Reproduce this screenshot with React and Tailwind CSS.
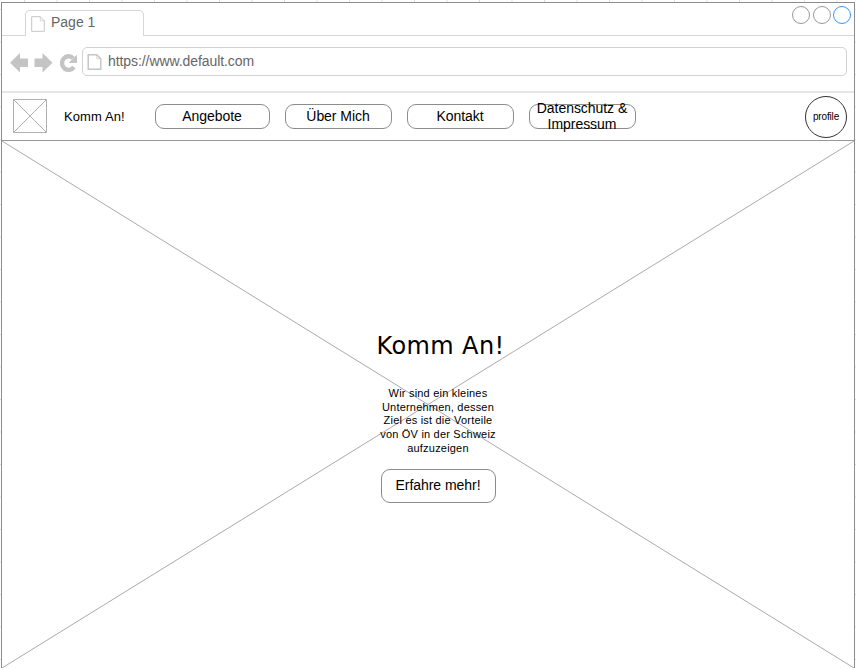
import React from "react";

function PageIcon({ className, stroke, width }) {
  return (
    <svg className={className} viewBox="0 0 14 16" fill="none" stroke={stroke} strokeWidth={width}>
      <path d="M.7.7H9.3L13.3 4.7V15.3H.7Z" />
      <path d="M9.3.7V4.7H13.3" strokeWidth=".7" />
    </svg>
  );
}

function NavButton({ children, className }) {
  return (
    <button className={`mb-px flex h-[25px] shrink-0 items-center justify-center rounded-[9px] border border-[#8c8c8c] pb-px pr-px text-sm leading-4 tracking-[-0.05px] text-black ${className}`}>
      <span className="whitespace-nowrap">{children}</span>
    </button>
  );
}

export default function App() {
  return (
    <div className="h-[668px] w-[856px] overflow-hidden bg-white bg-[linear-gradient(90deg,#ddd_1px,transparent_1px),linear-gradient(#ddd_1px,transparent_1px)] bg-[size:32.5px_32.5px] bg-[position:24px_9px] pl-px pt-[2px] font-['Liberation_Sans',Arial,sans-serif]">
      <div className="flex h-[670px] w-[854px] flex-col border border-[#8c8c8c] bg-white">
        <header className="h-[90px] shrink-0 border-b-2 border-[#e6e6e6]">
          <div className="flex h-[33px]">
            <div className="w-[23px] border-b border-[#d6d6d6]" />
            <div className="mt-[7px] flex w-[119px] rounded-t-[5px] border border-b-0 border-[#d6d6d6] pl-[5px] pt-[5px]">
              <PageIcon className="h-4 w-[14px]" stroke="#c6c6c6" width="1" />
              <span className="ml-[6px] -mt-[2px] text-sm leading-4 text-[#666]">Page 1</span>
            </div>
            <div className="flex flex-1 justify-end gap-[2.5px] border-b border-[#d6d6d6] pr-[3px] pt-[3px]">
              <i className="size-[18px] rounded-full border border-[#999]" />
              <i className="size-[18px] rounded-full border border-[#999]" />
              <i className="size-[18px] rounded-full border border-[#3399ff]" />
            </div>
          </div>
          <div className="flex pl-2 pr-[7px] pt-[11px]">
            <svg className="h-[30px] w-[72px] shrink-0" viewBox="0 0 72 30" fill="#c4c4c4">
              <path d="M0 15.7 10 6V11.5H18V20H10V25.5Z" />
              <path d="M42.5 15.7 32.5 6V11.5H24.5V20H32.5V25.5Z" />
              <path d="M64 20A6.6 6.8 0 1 1 63.2 11.2" fill="none" stroke="#c4c4c4" strokeWidth="4.4" />
              <path d="M67 7.8V16H58.6Z" />
            </svg>
            <div className="flex h-[29px] flex-1 rounded-[5px] border border-[#d2d2d2] pl-1 pt-[6px]">
              <PageIcon className="h-4 w-[15px]" stroke="#c4c4c4" width="1.4" />
              <span className="ml-[6px] -mt-px text-sm leading-4 tracking-[-0.08px] text-[#666]">https://www.default.com</span>
            </div>
          </div>
        </header>
        <nav className="flex h-12 shrink-0 items-center border-b border-[#999] pl-[11px] pr-[7px]">
          <svg className="mb-px h-[34px] w-[34px] shrink-0" viewBox="0 0 34 34" fill="none" stroke="#b0b0b0">
            <path d="M.5.5H33.5V33.5H.5ZM.5.5 33.5 33.5M33.5.5.5 33.5" />
          </svg>
          <span className="ml-[17px] w-[91px] shrink-0 text-[13px] leading-4 tracking-[0.1px]">Komm An!</span>
          <NavButton className="w-[115px]">Angebote</NavButton>
          <NavButton className="ml-[15px] w-[107px]">Über Mich</NavButton>
          <NavButton className="ml-[15px] w-[107px]">Kontakt</NavButton>
          <NavButton className="ml-[15px] w-[107px]">Datenschutz &amp;<br />Impressum</NavButton>
          <div className="ml-auto flex size-[42px] shrink-0 items-center justify-center rounded-full border border-[#333] text-[10px] tracking-[-0.15px]">
            profile
          </div>
        </nav>
        <main className="relative h-[529px] shrink-0">
          <svg className="absolute left-0 top-0 h-[528px] w-[852px]" viewBox="0 0 852 528" stroke="#aaa" strokeWidth="1">
            <path d="M0 0 852 527M852 0 0 527" />
          </svg>
          <div className="relative ml-[378px] flex w-[116px] flex-col items-center pt-[189px] text-center">
            <h1 className="ml-[5px] whitespace-nowrap font-['DejaVu_Sans',sans-serif] text-[24px] leading-8 tracking-[0.4px]">Komm An!</h1>
            <p className="mt-[25px] whitespace-nowrap text-[11px] leading-[13.7px] tracking-[0.2px]">
              Wir sind ein kleines<br />Unternehmen, dessen<br />Ziel es ist die Vorteile<br />von ÖV in der Schweiz<br />aufzuzeigen
            </p>
            <button className="mt-[13px] h-[34px] w-[115px] rounded-[9px] border border-[#8c8c8c] bg-white pb-[2px] text-sm tracking-[-0.05px]">Erfahre mehr!</button>
          </div>
        </main>
      </div>
    </div>
  );
}
